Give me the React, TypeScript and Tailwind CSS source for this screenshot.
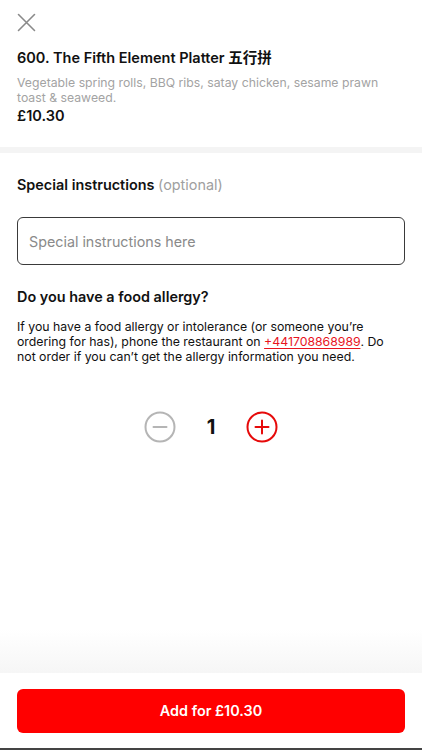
export default function App() {
  return (
    <div className="relative flex h-[750px] w-full flex-col overflow-hidden bg-white font-['Inter','Noto_Sans_CJK_SC',sans-serif] text-[#111]">
      <div className="px-[17px] pt-[13px]">
        <button className="block h-[19px] w-[19px]" aria-label="Close">
          <svg viewBox="0 0 19 19" className="h-[19px] w-[19px]" fill="none" stroke="#8a8a8a" strokeWidth="1.6" strokeLinecap="round">
            <path d="M1.5 1.5l16 16M17.5 1.5l-16 16" />
          </svg>
        </button>
        <h1 className="mt-[16px] text-[14.5px] leading-5 font-semibold">600. The Fifth Element Platter 五行拼</h1>
        <p className="mt-[7px] text-[12.25px] leading-[15px] text-[#a3a3a3]">
          Vegetable spring rolls, BBQ ribs, satay chicken, sesame prawn toast &amp; seaweed.
        </p>
        <p className="mt-[1px] text-[14.5px] leading-5 font-semibold">£10.30</p>
      </div>
      <div className="mt-[21px] h-[6px] bg-[#f4f4f4]" />
      <div className="px-[17px] pt-[22px]">
        <h2 className="text-[14.4px] leading-5 font-semibold">
          Special instructions <span className="font-normal text-[#a0a0a0]">(optional)</span>
        </h2>
        <input
          className="mt-[22px] h-12 w-full rounded-md border border-[#3a3a3a] px-[11px] text-[14.3px] placeholder:text-[#8a8a8a] outline-none"
          placeholder="Special instructions here"
        />
        <h2 className="mt-[22px] text-[14.4px] leading-5 font-semibold">Do you have a food allergy?</h2>
        <p className="mt-[12px] pr-[14px] text-[12.3px] leading-[15px] text-[#111]">
          If you have a food allergy or intolerance (or someone you’re ordering for has), phone the restaurant on{' '}
          <a className="text-[#e8141e] underline underline-offset-2">+441708868989</a>. Do not order if you can’t get the
          allergy information you need.
        </p>
        <div className="mt-[47px] flex items-center justify-center gap-[27px]">
          <button aria-label="Decrease" className="h-8 w-8">
            <svg viewBox="0 0 32 32" className="h-8 w-8" fill="none" stroke="#b5b5b5" strokeWidth="2">
              <circle cx="16" cy="16" r="14.5" />
              <path d="M9.5 16h13" strokeLinecap="round" />
            </svg>
          </button>
          <span className="w-4 text-center text-[20px] leading-6 font-bold">1</span>
          <button aria-label="Increase" className="h-8 w-8">
            <svg viewBox="0 0 32 32" className="h-8 w-8" fill="none" stroke="#e60a0a" strokeWidth="2">
              <circle cx="16" cy="16" r="14.5" />
              <path d="M9.5 16h13M16 9.5v13" strokeLinecap="round" />
            </svg>
          </button>
        </div>
      </div>
      <div className="mt-auto h-[44px] bg-gradient-to-b from-white to-[#f6f6f6]" />
      <div className="bg-white px-[17px] pt-[16px] pb-[15px]">
        <button className="h-[44px] w-full rounded-md bg-[#ff0000] text-[14.4px] font-semibold text-white">Add for £10.30</button>
      </div>
      <div className="h-[2px] bg-[#444]" />
    </div>
  )
}
